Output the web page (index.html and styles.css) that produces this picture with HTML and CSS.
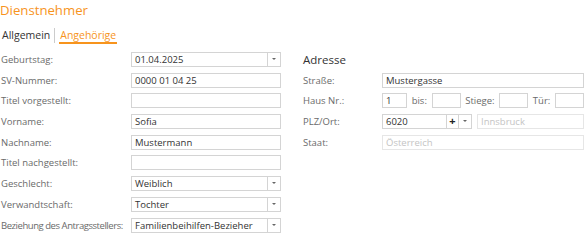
FILE: index.html
```html
<!DOCTYPE html>
<html>

<head>
    <meta charset="utf-8" />
    <title>Dienstnehmer</title>
    <link rel="stylesheet" href="styles.css">
</head>

<body>
    <div class="page">
        <h1 class="title">Dienstnehmer</h1>

        <div class="tabs">
            <span class="tab">Allgemein</span>
            <span class="tab_sep"></span>
            <span class="tab active">Angehörige</span>
        </div>

        <div class="cols">
            <div class="form form_left">
                <label>Geburtstag:</label>
                <div class="field select"><span class="val">01.04.2025</span><span class="arrow"></span></div>

                <label>SV-Nummer:</label>
                <div class="field"><span class="val">0000 01 04 25</span></div>

                <label>Titel vorgestellt:</label>
                <div class="field"></div>

                <label>Vorname:</label>
                <div class="field"><span class="val">Sofia</span></div>

                <label>Nachname:</label>
                <div class="field"><span class="val">Mustermann</span></div>

                <label>Titel nachgestellt:</label>
                <div class="field"></div>

                <label>Geschlecht:</label>
                <div class="field select"><span class="val">Weiblich</span><span class="arrow"></span></div>

                <label>Verwandtschaft:</label>
                <div class="field select"><span class="val">Tochter</span><span class="arrow"></span></div>

                <label class="long">Beziehung des Antragsstellers:</label>
                <div class="field select"><span class="val">Familienbeihilfen-Bezieher</span><span class="arrow"></span></div>
            </div>

            <div class="form form_right">
                <h2 class="sub">Adresse</h2>

                <label>Straße:</label>
                <div class="field"><span class="val">Mustergasse</span></div>

                <label>Haus Nr.:</label>
                <div class="house">
                    <div class="field first"><span class="val">1</span></div>
                    <span class="lbl">bis:</span>
                    <div class="field small"></div>
                    <span class="lbl">Stiege:</span>
                    <div class="field small"></div>
                    <span class="lbl">Tür:</span>
                    <div class="field small"></div>
                </div>

                <label>PLZ/Ort:</label>
                <div class="plz">
                    <div class="field zip"><span class="val">6020</span><span class="plus">+</span><span class="arrow"></span></div>
                    <div class="field off city"><span class="val">Innsbruck</span></div>
                </div>

                <label>Staat:</label>
                <div class="field off"><span class="val">Österreich</span></div>
            </div>
        </div>
    </div>
</body>

</html>
```

FILE: styles.css
```css
* {
    margin: 0;
    padding: 0;
    box-sizing: border-box;
}

body {
    background: #fff;
    font-family: "Open Sans", "Noto Sans", sans-serif;
    color: #333;
}

.page {
    width: 586px;
    padding: 0 0 0 1px;
}

.title {
    font-size: 13.2px;
    font-weight: normal;
    color: #f7941d;
    line-height: 20px;
    margin-left: -1px;
}

.tabs {
    display: flex;
    align-items: center;
    height: 17px;
    margin-top: 7px;
    font-size: 10.5px;
}

.tab {
    line-height: 14px;
    color: #333;
    border-bottom: 2px solid transparent;
    padding: 0 1px;
}

.tab.active {
    color: #f7941d;
    border-bottom-color: #f7941d;
}

.tab_sep {
    width: 1px;
    height: 15px;
    background: #ccc;
    margin: 0 4px 0 3px;
}

.cols {
    display: flex;
    margin-top: 8px;
}

.form {
    display: grid;
    grid-auto-rows: 15px;
    row-gap: 5.7px;
    align-items: center;
    font-size: 9.5px;
}

.form_left {
    grid-template-columns: 130px 150px;
}

.form_right {
    grid-template-columns: 79px 202px;
    margin-left: 22px;
}

.form label {
    color: #6a6a6a;
    white-space: nowrap;
}

.form label.long {
    letter-spacing: -0.45px;
}

.sub {
    grid-column: 1 / -1;
    font-size: 11.5px;
    font-weight: normal;
    color: #333;
}

.field {
    height: 15px;
    border: 1px solid #d4d4d4;
    background: #fff;
    display: flex;
    align-items: center;
}

.field .val {
    flex: 1;
    padding-left: 3px;
    white-space: nowrap;
    overflow: hidden;
}

.arrow {
    width: 13px;
    height: 100%;
    border-left: 1px solid #d4d4d4;
    position: relative;
}

.arrow:after {
    content: "";
    position: absolute;
    left: 4px;
    top: 5px;
    border-left: 2px solid transparent;
    border-right: 2px solid transparent;
    border-top: 2px solid #666;
}

.house {
    display: flex;
    align-items: center;
    justify-content: space-between;
}

.house .first {
    width: 25px;
}

.house .small {
    width: 29px;
}

.house .lbl {
    color: #6a6a6a;
}

.plz {
    display: flex;
    gap: 5px;
}

.zip {
    width: 90px;
}

.plus {
    width: 12px;
    height: 100%;
    border-left: 1px solid #d4d4d4;
    text-align: center;
    font-weight: bold;
    font-size: 11px;
    line-height: 12px;
    color: #222;
}

.city {
    flex: 1;
}

.field.off {
    border-color: #e6e6e6;
    color: #c4c4c4;
}
```
